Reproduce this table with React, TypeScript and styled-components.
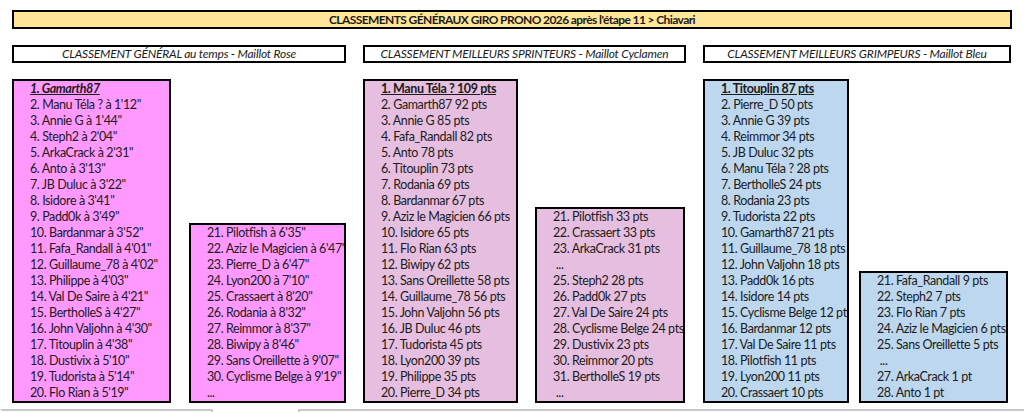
import styled, { createGlobalStyle } from "styled-components";

type Standing = {
  header: string;
  color: string;
  italicLeader?: boolean;
  mainWidth: number;
  extraWidth: number;
  gap: number;
  width: number;
  main: Array<string>;
  extra: Array<string>;
};

const STANDINGS: Array<Standing> = [
  {
    header: "CLASSEMENT GÉNÉRAL au temps - Maillot Rose",
    color: "#ff99ff",
    italicLeader: true,
    width: 334,
    mainWidth: 159,
    extraWidth: 157,
    gap: 18,
    main: [
      "1. Gamarth87",
      "2. Manu Téla ? à 1'12\"",
      "3. Annie G à 1'44\"",
      "4. Steph2 à 2'04\"",
      "5. ArkaCrack à 2'31\"",
      "6. Anto à 3'13\"",
      "7. JB Duluc à 3'22\"",
      "8. Isidore à 3'41\"",
      "9. Padd0k à 3'49\"",
      "10. Bardanmar à 3'52\"",
      "11. Fafa_Randall à 4'01\"",
      "12. Guillaume_78 à 4'02\"",
      "13. Philippe à 4'03\"",
      "14. Val De Saire à 4'21\"",
      "15. BertholleS à 4'27\"",
      "16. John Valjohn à 4'30\"",
      "17. Titouplin à 4'38\"",
      "18. Dustivix à 5'10\"",
      "19. Tudorista à 5'14\"",
      "20. Flo Rian à 5'19\"",
    ],
    extra: [
      "21. Pilotfish à 6'35\"",
      "22. Aziz le Magicien à 6'47\"",
      "23. Pierre_D à 6'47\"",
      "24. Lyon200 à 7'10\"",
      "25. Crassaert à 8'20\"",
      "26. Rodania à 8'32\"",
      "27. Reimmor à 8'37\"",
      "28. Biwipy à 8'46\"",
      "29. Sans Oreillette à 9'07\"",
      "30. Cyclisme Belge à 9'19\"",
      "...",
    ],
  },
  {
    header: "CLASSEMENT MEILLEURS SPRINTEURS - Maillot Cyclamen",
    color: "#e6bfe0",
    width: 323,
    mainWidth: 155,
    extraWidth: 150,
    gap: 17,
    main: [
      "1. Manu Téla ? 109 pts",
      "2. Gamarth87 92 pts",
      "3. Annie G 85 pts",
      "4. Fafa_Randall 82 pts",
      "5. Anto 78 pts",
      "6. Titouplin 73 pts",
      "7. Rodania 69 pts",
      "8. Bardanmar 67 pts",
      "9. Aziz le Magicien 66 pts",
      "10. Isidore 65 pts",
      "11. Flo Rian 63 pts",
      "12. Biwipy 62 pts",
      "13. Sans Oreillette 58 pts",
      "14. Guillaume_78 56 pts",
      "15. John Valjohn 56 pts",
      "16. JB Duluc 46 pts",
      "17. Tudorista 45 pts",
      "18. Lyon200 39 pts",
      "19. Philippe 35 pts",
      "20. Pierre_D 34 pts",
    ],
    extra: [
      "21. Pilotfish 33 pts",
      "22. Crassaert 33 pts",
      "23. ArkaCrack 31 pts",
      " ...",
      "25. Steph2 28 pts",
      "26. Padd0k 27 pts",
      "27. Val De Saire 24 pts",
      "28. Cyclisme Belge 24 pts",
      "29. Dustivix 23 pts",
      "30. Reimmor 20 pts",
      "31. BertholleS 19 pts",
      " ...",
    ],
  },
  {
    header: "CLASSEMENT MEILLEURS GRIMPEURS - Maillot Bleu",
    color: "#bdd7ee",
    width: 308,
    mainWidth: 146,
    extraWidth: 149,
    gap: 10,
    main: [
      "1. Titouplin 87 pts",
      "2. Pierre_D 50 pts",
      "3. Annie G 39 pts",
      "4. Reimmor 34 pts",
      "5. JB Duluc 32 pts",
      "6. Manu Téla ? 28 pts",
      "7. BertholleS 24 pts",
      "8. Rodania 23 pts",
      "9. Tudorista 22 pts",
      "10. Gamarth87 21 pts",
      "11. Guillaume_78 18 pts",
      "12. John Valjohn 18 pts",
      "13. Padd0k 16 pts",
      "14. Isidore 14 pts",
      "15. Cyclisme Belge 12 pts",
      "16. Bardanmar 12 pts",
      "17. Val De Saire 11 pts",
      "18. Pilotfish 11 pts",
      "19. Lyon200 11 pts",
      "20. Crassaert 10 pts",
    ],
    extra: [
      "21. Fafa_Randall 9 pts",
      "22. Steph2 7 pts",
      "23. Flo Rian 7 pts",
      "24. Aziz le Magicien 6 pts",
      "25. Sans Oreillette 5 pts",
      " ...",
      "27. ArkaCrack 1 pt",
      "28. Anto 1 pt",
    ],
  },
];

const GlobalStyle = createGlobalStyle`
  body {
    margin: 0;
    background: #ffffff;
    overflow: hidden;
    font-family: Lato, "Liberation Sans", sans-serif;
    color: #1b1b1b;
  }
`;

const Sheet = styled.div`
  width: 1024px;
  height: 412px;
  box-sizing: border-box;
  padding: 10px 12px 0;
  overflow: hidden;
`;

const Title = styled.div`
  height: 19px;
  box-sizing: border-box;
  border: 2px solid #000;
  background: #ffe699;
  font-weight: 700;
  font-size: 12px;
  line-height: 15px;
  text-align: center;
  letter-spacing: -0.6px;
`;

const Columns = styled.div`
  display: flex;
  gap: 17px;
  margin-top: 16px;
`;

const Column = styled.div<{ $width: number }>`
  width: ${(p) => p.$width}px;
  flex: none;
`;

const Header = styled.div`
  height: 18px;
  box-sizing: border-box;
  border: 2px solid #000;
  font-style: italic;
  font-size: 12px;
  line-height: 14px;
  text-align: center;
  white-space: nowrap;
  letter-spacing: -0.2px;
`;

const Boxes = styled.div<{ $gap: number }>`
  display: flex;
  align-items: flex-end;
  gap: ${(p) => p.$gap}px;
  margin-top: 16px;
`;

const Box = styled.div<{ $width: number; $color: string }>`
  width: ${(p) => p.$width}px;
  flex: none;
  box-sizing: border-box;
  border: 2px solid #000;
  background: ${(p) => p.$color};
  padding-left: 16px;
  overflow: hidden;
`;

const Row = styled.div<{ $leader?: boolean; $italic?: boolean }>`
  height: 16px;
  line-height: 16px;
  font-size: 12.5px;
  letter-spacing: -0.4px;
  white-space: pre;
  font-weight: ${(p) => (p.$leader ? 700 : 400)};
  font-style: ${(p) => (p.$italic ? "italic" : "normal")};
  text-decoration: ${(p) => (p.$leader ? "underline" : "none")};
`;

const Footer = styled.div`
  display: flex;
  margin: 6px -12px 0;
`;

const FooterCell = styled.div<{ $width?: number; $noLeft?: boolean }>`
  height: 12px;
  box-sizing: border-box;
  border: 2px solid #c8c8c8;
  border-bottom: none;
  border-left-color: ${(p) => (p.$noLeft ? "transparent" : "#c8c8c8")};
  width: ${(p) => (p.$width ? `${p.$width}px` : "auto")};
  flex: ${(p) => (p.$width ? "none" : "1")};
  margin-right: ${(p) => (p.$width ? "85px" : "-4px")};
`;

const StandingColumn = ({ standing }: { standing: Standing }) => (
  <Column $width={standing.width}>
    <Header>{standing.header}</Header>
    <Boxes $gap={standing.gap}>
      <Box $width={standing.mainWidth} $color={standing.color}>
        {standing.main.map((line, i) => (
          <Row key={i} $leader={i === 0} $italic={i === 0 && standing.italicLeader}>
            {line}
          </Row>
        ))}
      </Box>
      <Box $width={standing.extraWidth} $color={standing.color}>
        {standing.extra.map((line, i) => (
          <Row key={i}>{line}</Row>
        ))}
      </Box>
    </Boxes>
  </Column>
);

const App = () => (
  <>
    <GlobalStyle />
    <Sheet>
      <Title>CLASSEMENTS GÉNÉRAUX GIRO PRONO 2026 après l'étape 11 &gt; Chiavari</Title>
      <Columns>
        {STANDINGS.map((standing, i) => (
          <StandingColumn key={i} standing={standing} />
        ))}
      </Columns>
      <Footer>
        <FooterCell $width={213} $noLeft />
        <FooterCell />
      </Footer>
    </Sheet>
  </>
);

export default App;
